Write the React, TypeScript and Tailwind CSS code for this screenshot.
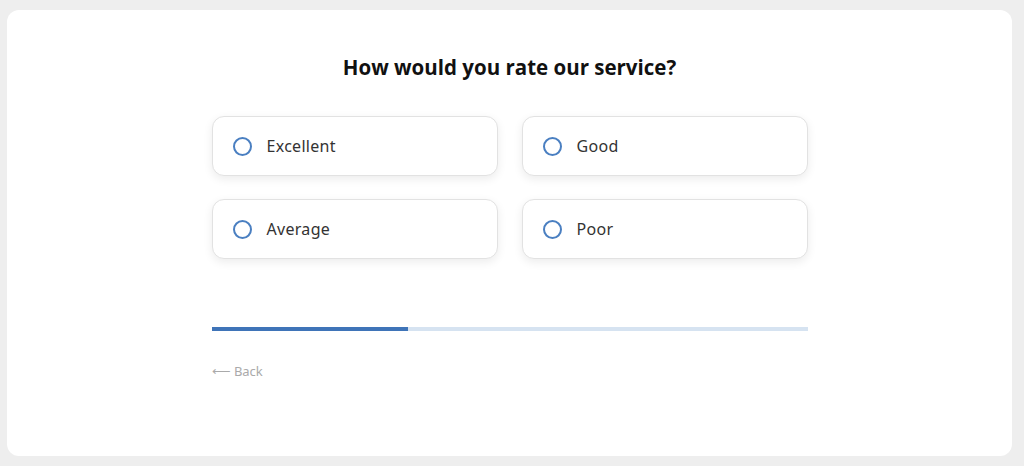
import React from 'react'

const options = ['Excellent', 'Good', 'Average', 'Poor']

const App = () => {
  return (
    <div className="min-h-screen bg-[#eeeeee] pt-[10px] pr-[12px] pb-[10px] pl-[7px]">
      <div className="flex h-[446px] flex-col items-center rounded-[12px] bg-white pt-[43px]">
        <h1 className="text-[20.5px] leading-[28px] font-bold text-[#111] [font-family:'Open_Sans',sans-serif]">
          How would you rate our service?
        </h1>
        <div className="mt-[35px] grid w-[596px] grid-cols-2 gap-x-[24px] gap-y-[23px]">
          {options.map(opt => (
            <button
              key={opt}
              className="flex h-[60px] items-center gap-[15px] rounded-[12px] border border-[#e2e2e2] bg-white pl-[20px] text-left shadow-[0_3px_10px_rgba(0,0,0,0.08)]"
            >
              <span className="h-[19px] w-[19px] rounded-full border-2 border-[#4a7fc1]" />
              <span className="text-[16px] tracking-[0.3px] text-[#333] [font-family:'Noto_Sans',sans-serif]">{opt}</span>
            </button>
          ))}
        </div>
        <div className="mt-[68px] h-[4px] w-[596px] bg-[#d6e3f1]">
          <div className="h-full w-[33%] bg-[#3f74b8]" />
        </div>
        <div className="mt-[27px] w-[596px]">
          <button className="text-[13px] text-[#aaaaaa] [font-family:'Noto_Sans',sans-serif]">
            ⟵ Back
          </button>
        </div>
      </div>
    </div>
  )
}

export default App
